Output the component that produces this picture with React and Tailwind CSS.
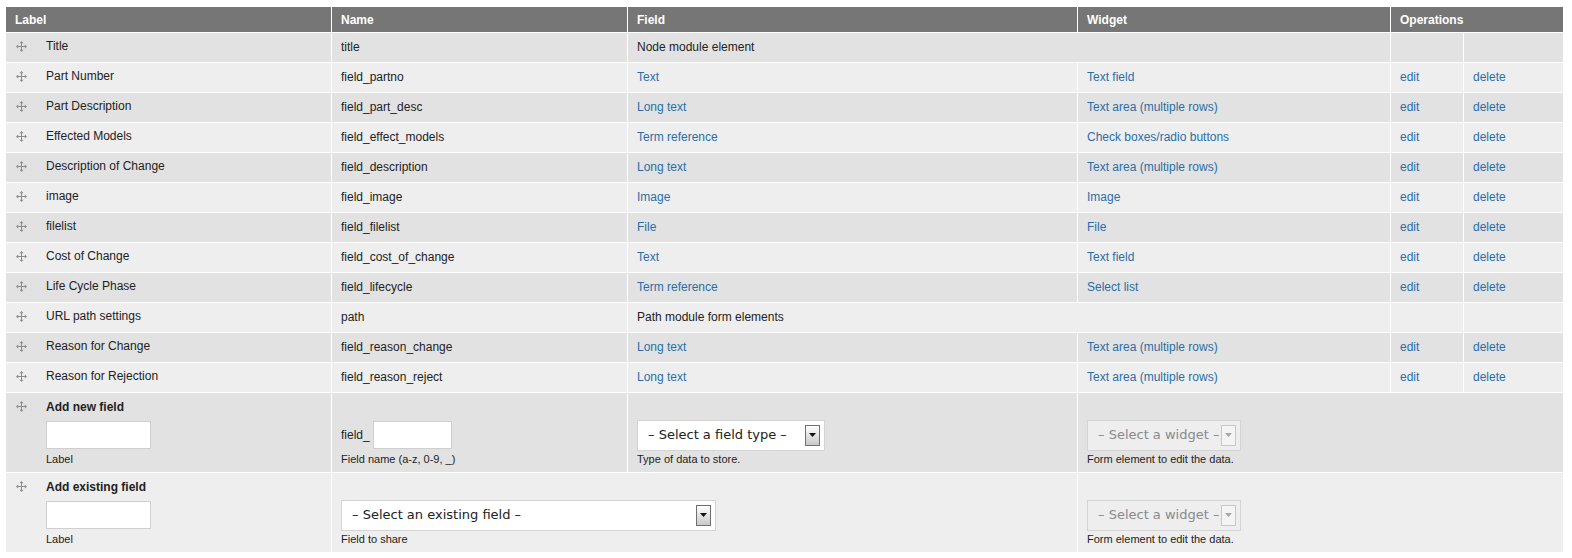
const rows = [
  { label: 'Title', name: 'title', field: 'Node module element', plain: true },
  { label: 'Part Number', name: 'field_partno', field: 'Text', widget: 'Text field' },
  { label: 'Part Description', name: 'field_part_desc', field: 'Long text', widget: 'Text area (multiple rows)' },
  { label: 'Effected Models', name: 'field_effect_models', field: 'Term reference', widget: 'Check boxes/radio buttons' },
  { label: 'Description of Change', name: 'field_description', field: 'Long text', widget: 'Text area (multiple rows)' },
  { label: 'image', name: 'field_image', field: 'Image', widget: 'Image' },
  { label: 'filelist', name: 'field_filelist', field: 'File', widget: 'File' },
  { label: 'Cost of Change', name: 'field_cost_of_change', field: 'Text', widget: 'Text field' },
  { label: 'Life Cycle Phase', name: 'field_lifecycle', field: 'Term reference', widget: 'Select list' },
  { label: 'URL path settings', name: 'path', field: 'Path module form elements', plain: true },
  { label: 'Reason for Change', name: 'field_reason_change', field: 'Long text', widget: 'Text area (multiple rows)' },
  { label: 'Reason for Rejection', name: 'field_reason_reject', field: 'Long text', widget: 'Text area (multiple rows)' },
];

function DragHandle() {
  return (
    <svg width="11" height="11" viewBox="0 0 11 11" className="shrink-0">
      <path d="M5.5 1.5v8M1.5 5.5h8" stroke="#8c8c8c" strokeWidth="1" fill="none" />
      <g fill="#8c8c8c">
        <path d="M5.5 0L3.5 2.2h4z" />
        <path d="M5.5 11L3.5 8.8h4z" />
        <path d="M0 5.5L2.2 3.5v4z" />
        <path d="M11 5.5L8.8 3.5v4z" />
      </g>
    </svg>
  );
}

function FakeSelect({ text, width, disabled }) {
  return (
    <div
      className={`flex h-[31px] items-center justify-between border pl-[10px] pr-[4px] font-['DejaVu_Sans',sans-serif] text-[13px] ${
        disabled ? 'border-[#d4d4d4] bg-[#eeeeee] text-[#8a8a8a]' : 'border-[#d4d4d4] bg-white text-[#222]'
      }`}
      style={{ width }}
    >
      <span className="whitespace-nowrap">{text}</span>
      <div
        className={`flex h-[21px] w-[15px] items-center justify-center border ${
          disabled ? 'border-[#c8c8c8] bg-[#f4f4f4]' : 'border-[#6f6f6f] bg-gradient-to-b from-white to-[#c9c9c9]'
        }`}
      >
        <svg width="7" height="4" viewBox="0 0 7 4">
          <path d="M0 0h7L3.5 4z" fill={disabled ? '#a8a8a8' : '#111'} />
        </svg>
      </div>
    </div>
  );
}

function Desc({ children }) {
  return <div className="mt-[3px] h-[12px] text-[11px] leading-[12px] text-[#222]">{children}</div>;
}

export default function App() {
  const td = 'border border-white px-[9px] pb-[2px] align-middle';
  const tdTop = 'border border-white px-[9px] pt-[5px] align-top';
  const link = 'text-[#2a6ea6]';
  return (
    <div className="min-h-screen bg-white pt-[6px] pl-[5px] font-['Liberation_Sans',Arial,sans-serif] text-[12px] text-[#222]">
      <table className="w-[1558px] table-fixed border-collapse">
        <colgroup>
          <col className="w-[326px]" />
          <col className="w-[296px]" />
          <col className="w-[450px]" />
          <col className="w-[313px]" />
          <col className="w-[73px]" />
          <col className="w-[100px]" />
        </colgroup>
        <thead>
          <tr className="h-[26px] bg-[#767676] text-left font-bold text-white">
            <th className="border border-white px-[9px]">Label</th>
            <th className="border border-white px-[9px]">Name</th>
            <th className="border border-white px-[9px]">Field</th>
            <th className="border border-white px-[9px]">Widget</th>
            <th colSpan={2} className="border border-white px-[9px]">Operations</th>
          </tr>
        </thead>
        <tbody>
          {rows.map((r, i) => (
            <tr key={r.name} className={`h-[30px] ${i % 2 === 0 ? 'bg-[#e2e2e2]' : 'bg-[#eeeeee]'}`}>
              <td className={td}>
                <div className="flex items-center gap-[19px] pb-[1px] pl-[1px]">
                  <DragHandle />
                  <span>{r.label}</span>
                </div>
              </td>
              <td className={td}>{r.name}</td>
              {r.plain ? (
                <td colSpan={2} className={td}>{r.field}</td>
              ) : (
                <>
                  <td className={`${td} ${link}`}>{r.field}</td>
                  <td className={`${td} ${link}`}>{r.widget}</td>
                </>
              )}
              <td className={`${td} ${link} px-[6px]`}>{r.plain ? '' : 'edit'}</td>
              <td className={`${td} ${link} px-[6px]`}>{r.plain ? '' : 'delete'}</td>
            </tr>
          ))}

          {/* Add new field */}
          <tr className="h-[80px] bg-[#e2e2e2]">
            <td className={tdTop}>
              <div className="flex gap-[19px] pl-[1px]">
                <div className="pt-[3px]"><DragHandle /></div>
                <div>
                  <div className="h-[15px] font-bold">Add new field</div>
                  <div className="mt-[7px] flex h-[30px] items-center">
                    <div className="h-[28px] w-[105px] border border-[#cfcfcf] bg-white" />
                  </div>
                  <Desc>Label</Desc>
                </div>
              </div>
            </td>
            <td className={tdTop}>
              <div className="h-[15px]" />
              <div className="mt-[7px] flex h-[30px] items-center gap-[3px]">
                <span>field_</span>
                <div className="h-[28px] w-[79px] border border-[#cfcfcf] bg-white" />
              </div>
              <Desc>Field name (a-z, 0-9, _)</Desc>
            </td>
            <td className={tdTop}>
              <div className="h-[15px]" />
              <div className="mt-[7px] flex h-[30px] items-center">
                <FakeSelect text="– Select a field type –" width={188} />
              </div>
              <Desc>Type of data to store.</Desc>
            </td>
            <td colSpan={3} className={tdTop}>
              <div className="h-[15px]" />
              <div className="mt-[7px] flex h-[30px] items-center">
                <FakeSelect text="– Select a widget –" width={154} disabled />
              </div>
              <Desc>Form element to edit the data.</Desc>
            </td>
          </tr>

          {/* Add existing field */}
          <tr className="h-[80px] bg-[#eeeeee]">
            <td className={tdTop}>
              <div className="flex gap-[19px] pl-[1px]">
                <div className="pt-[3px]"><DragHandle /></div>
                <div>
                  <div className="h-[15px] font-bold">Add existing field</div>
                  <div className="mt-[7px] flex h-[30px] items-center">
                    <div className="h-[28px] w-[105px] border border-[#cfcfcf] bg-white" />
                  </div>
                  <Desc>Label</Desc>
                </div>
              </div>
            </td>
            <td colSpan={2} className={tdTop}>
              <div className="h-[15px]" />
              <div className="mt-[7px] flex h-[30px] items-center">
                <FakeSelect text="– Select an existing field –" width={375} />
              </div>
              <Desc>Field to share</Desc>
            </td>
            <td colSpan={3} className={tdTop}>
              <div className="h-[15px]" />
              <div className="mt-[7px] flex h-[30px] items-center">
                <FakeSelect text="– Select a widget –" width={154} disabled />
              </div>
              <Desc>Form element to edit the data.</Desc>
            </td>
          </tr>
        </tbody>
      </table>
    </div>
  );
}
